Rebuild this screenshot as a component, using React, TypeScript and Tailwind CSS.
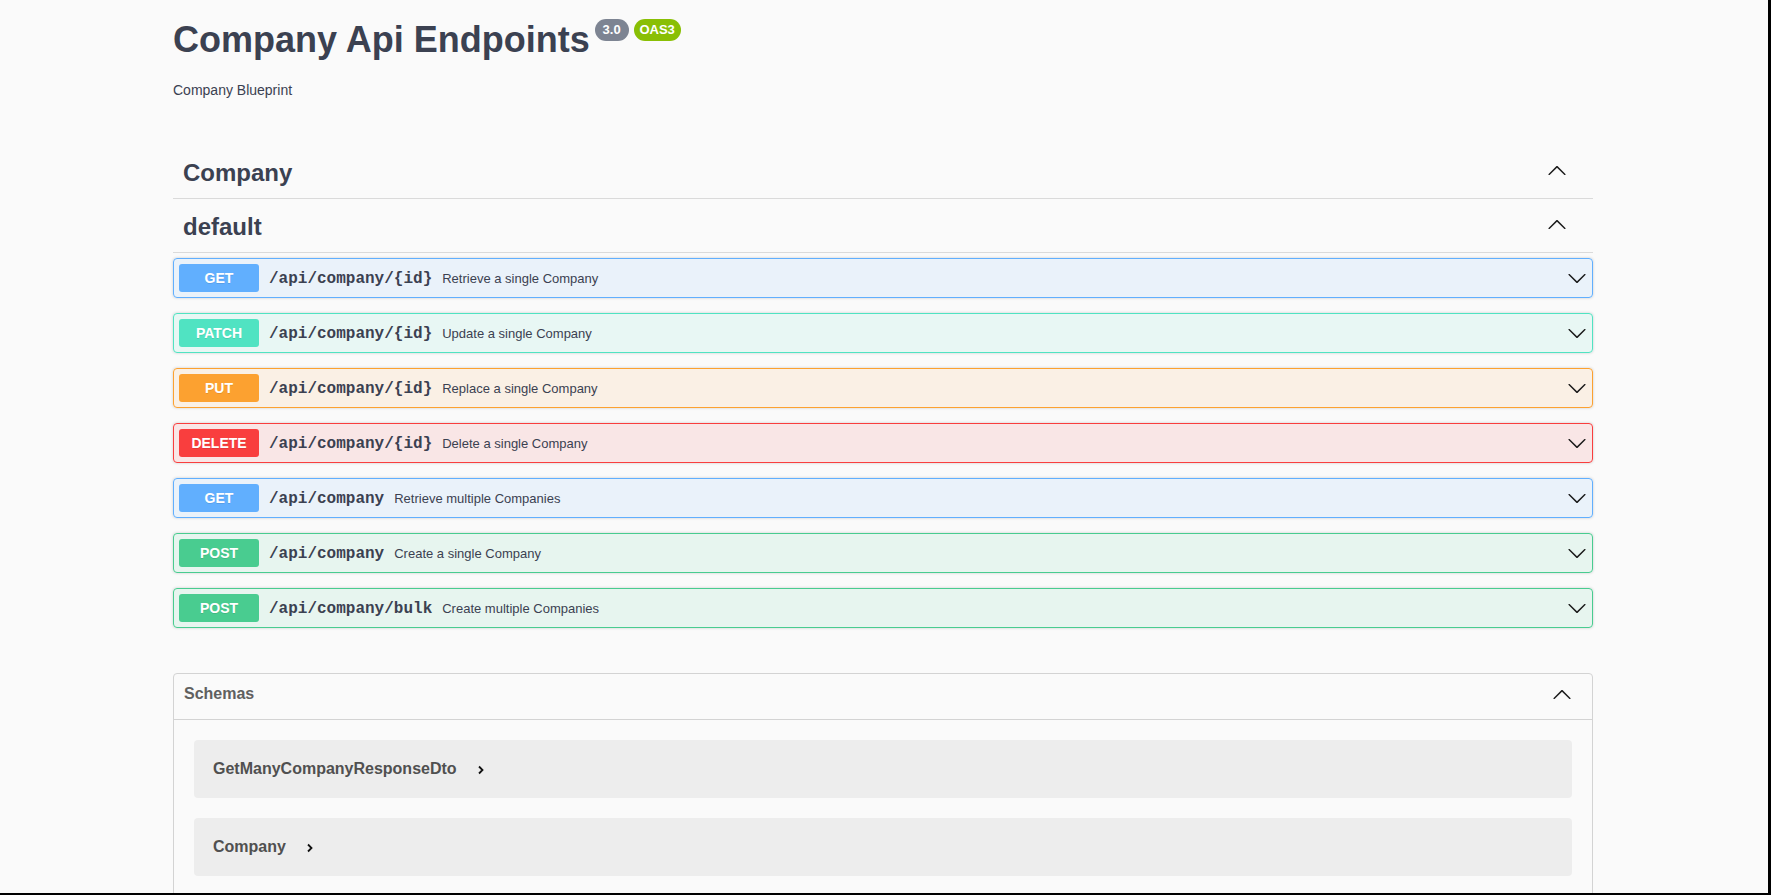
import React from 'react';

type Method = 'GET' | 'PATCH' | 'PUT' | 'DELETE' | 'POST';

const METHOD_STYLES: Record<Method, { block: string; badge: string }> = {
  GET: { block: 'bg-[rgba(97,175,254,0.1)] border-[#61affe]', badge: 'bg-[#61affe]' },
  PATCH: { block: 'bg-[rgba(80,227,194,0.1)] border-[#50e3c2]', badge: 'bg-[#50e3c2]' },
  PUT: { block: 'bg-[rgba(252,161,48,0.1)] border-[#fca130]', badge: 'bg-[#fca130]' },
  DELETE: { block: 'bg-[rgba(249,62,62,0.1)] border-[#f93e3e]', badge: 'bg-[#f93e3e]' },
  POST: { block: 'bg-[rgba(73,204,144,0.1)] border-[#49cc90]', badge: 'bg-[#49cc90]' },
};

const OPERATIONS: { method: Method; path: string; summary: string }[] = [
  { method: 'GET', path: '/api/company/{id}', summary: 'Retrieve a single Company' },
  { method: 'PATCH', path: '/api/company/{id}', summary: 'Update a single Company' },
  { method: 'PUT', path: '/api/company/{id}', summary: 'Replace a single Company' },
  { method: 'DELETE', path: '/api/company/{id}', summary: 'Delete a single Company' },
  { method: 'GET', path: '/api/company', summary: 'Retrieve multiple Companies' },
  { method: 'POST', path: '/api/company', summary: 'Create a single Company' },
  { method: 'POST', path: '/api/company/bulk', summary: 'Create multiple Companies' },
];

// the third model is cut off by the bottom of the window
const SCHEMAS = ['GetManyCompanyResponseDto', 'Company', ''];

function Arrow({ up = false, className = '' }: { up?: boolean; className?: string }) {
  return (
    <svg
      width="20"
      height="20"
      viewBox="0 0 20 20"
      className={`shrink-0 ${up ? 'rotate-180' : ''} ${className}`}
      fill="#1b1b1b"
    >
      <path d="M17.418 6.109c.272-.268.709-.268.979 0s.271.701 0 .969l-7.908 7.83c-.27.268-.707.268-.979 0l-7.908-7.83c-.27-.268-.27-.701 0-.969.271-.268.709-.268.979 0L10 13.25l7.418-7.141z" />
    </svg>
  );
}

function TagRow({ name }: { name: string }) {
  return (
    <div className="flex items-center justify-between h-[49px] pl-[10px] pr-[26px] border-b border-[#dadada] mb-[5px]">
      <h3 className="text-[24px] font-bold text-[#3b4151] leading-normal pb-[2px]">{name}</h3>
      <Arrow up className="mb-[6px]" />
    </div>
  );
}

function OperationRow({ method, path, summary }: { method: Method; path: string; summary: string }) {
  const s = METHOD_STYLES[method];
  return (
    <div
      className={`flex items-center h-[40px] p-[5px] mb-[15px] border rounded-[4px] shadow-[0_0_3px_rgba(0,0,0,0.19)] ${s.block}`}
    >
      <span
        className={`w-[80px] h-[28px] flex items-center justify-center rounded-[3px] text-[14px] font-bold text-white [text-shadow:0_1px_0_rgba(0,0,0,0.1)] ${s.badge}`}
      >
        {method}
      </span>
      <span className="px-[10px] pt-[1px] font-['Liberation_Mono',monospace] font-bold text-[16px] text-[#3b4151]">
        {path}
      </span>
      <span className="pt-[1px] text-[13px] text-[#3b4151]">{summary}</span>
      <div className="flex-1" />
      <Arrow />
    </div>
  );
}

export default function App() {
  return (
    <div className="w-full h-[895px] overflow-hidden bg-[#fafafa] border-r-[3px] border-b-[2px] border-black font-['Liberation_Sans',Arial,sans-serif]">
      <div className="ml-[173px] w-[1420px] pt-[18px]">
        <div className="flex items-start gap-[5px]">
          <h2 className="text-[36px] font-bold leading-[44px] text-[#3b4151]">Company Api Endpoints</h2>
          <div className="flex gap-[5px] mt-[1px]">
            <span className="w-[34px] h-[22px] rounded-full bg-[#7d8492] text-white text-[13px] font-bold leading-[22px] text-center">
              3.0
            </span>
            <span className="w-[47px] h-[22px] rounded-full bg-[#89bf04] text-white text-[13px] font-bold leading-[22px] text-center">
              OAS3
            </span>
          </div>
        </div>
        <p className="mt-[20px] text-[14px] leading-[16px] text-[#3b4151]">Company Blueprint</p>

        <div className="mt-[52px]">
          <TagRow name="Company" />
          <TagRow name="default" />
          {OPERATIONS.map((op, i) => (
            <OperationRow key={i} {...op} />
          ))}
        </div>

        <section className="mt-[45px] border border-[#d3d3d3] rounded-[4px]">
          <div className="flex items-start justify-between h-[46px] pt-[8px] pl-[10px] pr-[20px] border-b border-[#d3d3d3]">
            <h4 className="text-[16px] font-bold text-[#606060] leading-normal">Schemas</h4>
            <Arrow up className="mt-[3px]" />
          </div>
          <div className="px-[20px] pt-[20px] flex flex-col gap-[20px]">
            {SCHEMAS.map((name, i) => (
              <div key={i} className="h-[58px] rounded-[4px] bg-[rgba(0,0,0,0.05)] flex items-center pl-[19px]">
                {name && (
                  <>
                    <span className="text-[16px] font-bold text-[#505050]">{name}</span>
                    <svg width="10" height="10" viewBox="0 0 10 10" className="ml-[19px] mt-[1px]">
                      <path d="M3 1.5L6.5 5L3 8.5" fill="none" stroke="#111" strokeWidth="1.8" />
                    </svg>
                  </>
                )}
              </div>
            ))}
          </div>
        </section>
      </div>
    </div>
  );
}
